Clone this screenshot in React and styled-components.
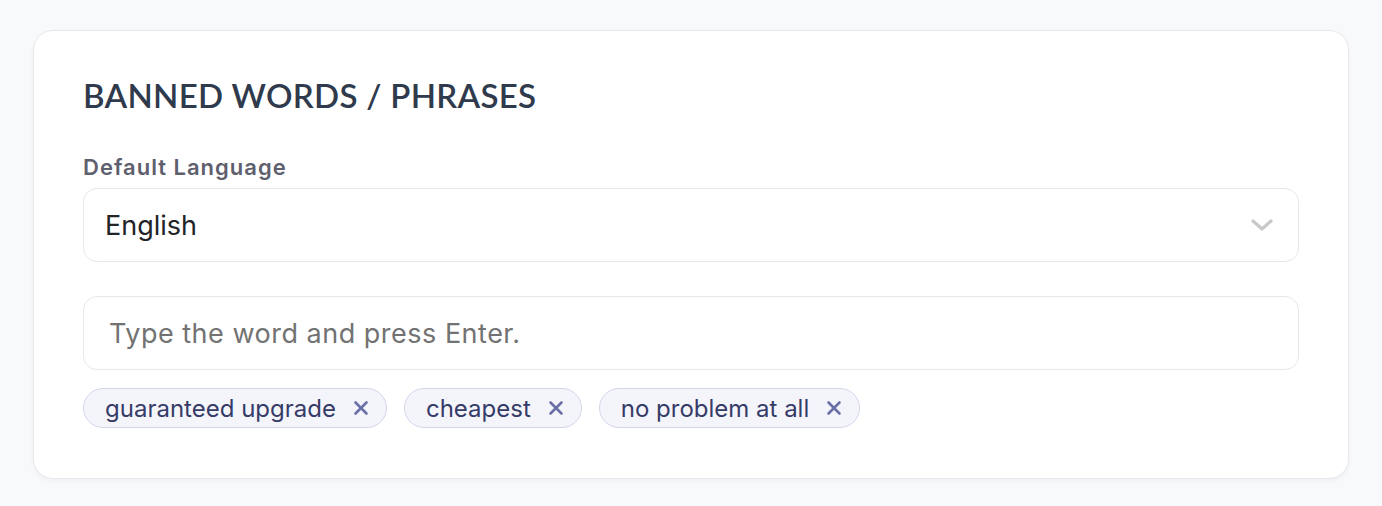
import React, { useState } from 'react';
import styled, { createGlobalStyle } from 'styled-components';

const GlobalStyle = createGlobalStyle`
  html, body {
    margin: 0;
    padding: 0;
    background: #f8f9fb;
  }
  body {
    font-family: Inter, "Noto Sans", sans-serif;
  }
`;

const Page = styled.div`
  padding: 30px 33px 29px 33px;
`;

const Card = styled.section`
  background: #ffffff;
  border: 1.5px solid #e8e9ec;
  border-radius: 20px;
  box-shadow: 0 2px 4px rgba(20, 30, 50, 0.04);
  padding: 44px 49px 50px 49px;
  display: flex;
  flex-direction: column;
`;

const Title = styled.h2`
  margin: 0 0 39px 0;
  font-family: Lato, "Noto Sans", sans-serif;
  font-weight: 600;
  font-size: 33px;
  line-height: 40px;
  color: #2f3a4d;
  letter-spacing: 0.3px;
`;

const Label = styled.label`
  font-family: Inter, sans-serif;
  font-weight: 600;
  font-size: 22px;
  line-height: 26px;
  letter-spacing: 1px;
  color: #5f606e;
  margin-bottom: 8px;
`;

const Field = styled.div`
  height: 74px;
  box-sizing: border-box;
  border: 1.5px solid #e7e8eb;
  border-radius: 14px;
  display: flex;
  align-items: center;
  justify-content: space-between;
  padding: 0 24px 0 21px;
  margin-bottom: ${p => p.$gap || 0}px;
`;

const Value = styled.span`
  font-family: Inter, sans-serif;
  font-size: 27px;
  color: #222428;
`;

const Input = styled.input`
  border: none;
  outline: none;
  width: 100%;
  background: transparent;
  font-family: Inter, sans-serif;
  font-size: 27px;
  letter-spacing: 0.5px;
  color: #222428;
  padding: 0 0 0 4px;
  &::placeholder {
    color: #727272;
  }
`;

const Tags = styled.div`
  display: flex;
  gap: 17px;
  margin-top: 18px;
`;

const Tag = styled.span`
  display: inline-flex;
  align-items: center;
  gap: 17px;
  height: 40px;
  box-sizing: border-box;
  padding: 0 17px 0 21px;
  border: 1.5px solid #d3d5ea;
  border-radius: 20px;
  background: #f4f5fb;
  font-family: Inter, sans-serif;
  font-size: 24px;
  color: #363b68;
`;

const Remove = styled.button`
  border: none;
  background: none;
  padding: 0;
  display: flex;
  cursor: pointer;
  color: #6a6fa8;
`;

const Chevron = () => (
  <svg width="24" height="16" viewBox="0 0 24 16" fill="none">
    <path d="M3 4l9 8 9-8" stroke="#c9c9cb" strokeWidth="3.2" strokeLinecap="round" strokeLinejoin="round" />
  </svg>
);

const Cross = () => (
  <svg width="16" height="16" viewBox="0 0 16 16" fill="none">
    <path d="M2.5 2.5l11 11M13.5 2.5l-11 11" stroke="currentColor" strokeWidth="2.6" strokeLinecap="round" />
  </svg>
);

const App = () => {
  const [words, setWords] = useState(['guaranteed upgrade', 'cheapest', 'no problem at all']);

  return (
    <Page>
      <GlobalStyle />
      <Card>
        <Title>BANNED WORDS / PHRASES</Title>
        <Label>Default Language</Label>
        <Field $gap={34}>
          <Value>English</Value>
          <Chevron />
        </Field>
        <Field>
          <Input placeholder="Type the word and press Enter." />
        </Field>
        <Tags>
          {words.map(w => (
            <Tag key={w}>
              {w}
              <Remove onClick={() => setWords(words.filter(x => x !== w))}>
                <Cross />
              </Remove>
            </Tag>
          ))}
        </Tags>
      </Card>
    </Page>
  );
};

export default App;
